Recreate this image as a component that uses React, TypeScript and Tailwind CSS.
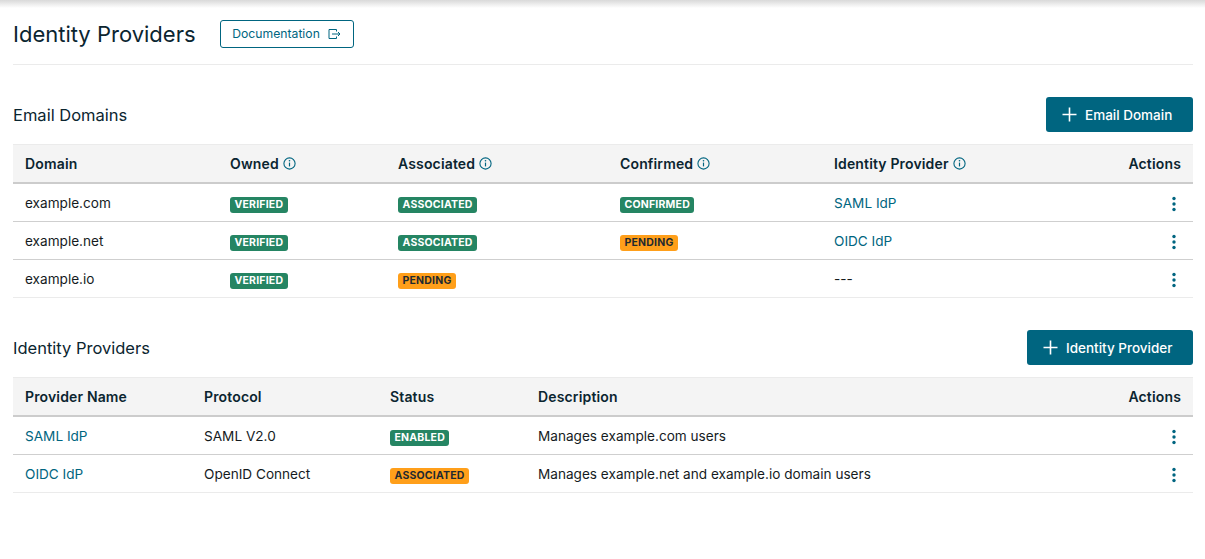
import React from "react";

const InfoIcon = () => (
  <svg width="13" height="13" viewBox="0 0 13 13" fill="none" className="-mt-[2px] text-[#006580]">
    <circle cx="6.5" cy="6.5" r="5.6" stroke="currentColor" strokeWidth="1.1" />
    <path d="M6.5 5.6v3.8" stroke="currentColor" strokeWidth="1.2" />
    <circle cx="6.5" cy="3.8" r="0.8" fill="currentColor" />
  </svg>
);

const KebabIcon = () => (
  <svg width="4" height="16" viewBox="0 0 4 16" className="text-[#006580]">
    <circle cx="2" cy="2.5" r="1.7" fill="currentColor" />
    <circle cx="2" cy="8" r="1.7" fill="currentColor" />
    <circle cx="2" cy="13.5" r="1.7" fill="currentColor" />
  </svg>
);

const ExitIcon = () => (
  <svg width="13" height="10" viewBox="0 0 13 10" fill="none" className="text-[#006580]">
    <path d="M8.5 2.5V0.5H1v9h7.5v-2" stroke="currentColor" strokeWidth="1" />
    <path d="M4 5h8M10 3l2 2-2 2" stroke="currentColor" strokeWidth="1" />
  </svg>
);

const PlusIcon = () => (
  <svg width="15" height="15" viewBox="0 0 15 15" fill="none" className="text-white">
    <path d="M7.5 0.5v14M0.5 7.5h14" stroke="currentColor" strokeWidth="1.6" />
  </svg>
);

// badge cells sit 1px lower than the text cells
const Badge = ({ label, kind }: { label: string; kind: "green" | "orange" }) => (
  <td className="px-3 pt-[2px]">
    <span
      className={
        kind === "green"
          ? "inline-flex h-4 items-center rounded-[3px] bg-[#258563] px-[4.5px] align-middle text-[10.5px] font-bold tracking-[0.2px] text-white"
          : "inline-flex h-4 items-center rounded-[3px] bg-[#ff9f1a] px-[4.5px] align-middle text-[10.5px] font-bold tracking-[0.2px] text-[#1f2a30]"
      }
    >
      {label}
    </span>
  </td>
);

const HeadCell = ({ label, info, width }: { label: string; info?: boolean; width: string }) => (
  <th className={`${width} px-3 pt-[2px] text-left text-sm leading-5 font-semibold tracking-[0.15px] text-[#0b2530]`}>
    <span className="inline-flex items-center gap-1">
      {label}
      {info && <InfoIcon />}
    </span>
  </th>
);

const ActionsHead = () => (
  <th className="px-3 pt-[2px] text-right text-sm leading-5 font-semibold tracking-[0.15px] text-[#0b2530]">Actions</th>
);

const ActionsCell = () => (
  <td className="px-3 text-right">
    <span className="inline-flex pr-[5px] align-middle">
      <KebabIcon />
    </span>
  </td>
);

const Link = ({ children }: { children: React.ReactNode }) => (
  <span className="text-[#006580]">{children}</span>
);

const firstRow = "h-[39px] border-b border-[#cfcfcf] text-[13.6px] leading-5 text-[#151b1e]";
const rowLine = "h-[38px] border-b border-[#cfcfcf] text-[13.6px] leading-5 text-[#151b1e]";
const lastRow = "h-[38px] border-b border-[#ebebeb] text-[13.6px] leading-5 text-[#151b1e]";
const headRow = "h-[38px] border-t border-[#ebebeb] border-b-2 border-b-[#cccccc] bg-[#f4f4f4]";

const SectionHead = ({ title, action, width }: { title: string; action: string; width: string }) => (
  <div className="flex h-[35px] items-center justify-between">
    <h2 className="pt-[1px] text-[16.5px] leading-6 font-normal text-[#0b2530]">{title}</h2>
    <button className={`${width} flex h-[35px] items-center justify-start gap-2 rounded-[3px] bg-[#006580] pl-4 text-[13.5px] leading-5 font-medium text-white`}>
      <PlusIcon />
      {action}
    </button>
  </div>
);

export default function App() {
  return (
    <div className="relative h-[559px] bg-white px-[13px] pr-3 font-['Inter',sans-serif]">
      <div className="absolute inset-x-0 top-0 h-2 bg-gradient-to-b from-[#d9d9d9] to-white" />

      <div className="flex h-[65px] items-center gap-6 border-b border-[#ebebeb] pt-[4px]">
        <h1 className="text-[22px] font-normal text-[#0b2530]">Identity Providers</h1>
        <button className="flex h-[28px] w-[134px] items-center justify-center gap-2 rounded-[3px] border border-[#006580] text-[12.2px] font-normal text-[#006580]">
          Documentation
          <ExitIcon />
        </button>
      </div>

      <div className="mt-8">
        <SectionHead title="Email Domains" action="Email Domain" width="w-[147px]" />
        <table className="mt-3 w-full table-fixed border-collapse">
          <thead>
            <tr className={headRow}>
              <HeadCell label="Domain" width="w-[205px]" />
              <HeadCell label="Owned" info width="w-[168px]" />
              <HeadCell label="Associated" info width="w-[222px]" />
              <HeadCell label="Confirmed" info width="w-[214px]" />
              <HeadCell label="Identity Provider" info width="w-[200px]" />
              <ActionsHead />
            </tr>
          </thead>
          <tbody>
            <tr className={firstRow}>
              <td className="px-3 pt-[2px]">example.com</td>
              <Badge label="VERIFIED" kind="green" />
              <Badge label="ASSOCIATED" kind="green" />
              <Badge label="CONFIRMED" kind="green" />
              <td className="px-3 pt-[2px]"><Link>SAML IdP</Link></td>
              <ActionsCell />
            </tr>
            <tr className={rowLine}>
              <td className="px-3">example.net</td>
              <Badge label="VERIFIED" kind="green" />
              <Badge label="ASSOCIATED" kind="green" />
              <Badge label="PENDING" kind="orange" />
              <td className="px-3"><Link>OIDC IdP</Link></td>
              <ActionsCell />
            </tr>
            <tr className={lastRow}>
              <td className="px-3">example.io</td>
              <Badge label="VERIFIED" kind="green" />
              <Badge label="PENDING" kind="orange" />
              <td className="px-3"></td>
              <td className="px-3">---</td>
              <ActionsCell />
            </tr>
          </tbody>
        </table>
      </div>

      <div className="mt-8">
        <SectionHead title="Identity Providers" action="Identity Provider" width="w-[166px]" />
        <table className="mt-3 w-full table-fixed border-collapse">
          <thead>
            <tr className={headRow}>
              <HeadCell label="Provider Name" width="w-[179px]" />
              <HeadCell label="Protocol" width="w-[186px]" />
              <HeadCell label="Status" width="w-[148px]" />
              <HeadCell label="Description" width="w-[500px]" />
              <ActionsHead />
            </tr>
          </thead>
          <tbody>
            <tr className={firstRow}>
              <td className="px-3 pt-[2px]"><Link>SAML IdP</Link></td>
              <td className="px-3 pt-[2px]">SAML V2.0</td>
              <Badge label="ENABLED" kind="green" />
              <td className="px-3 pt-[2px]">Manages example.com users</td>
              <ActionsCell />
            </tr>
            <tr className={lastRow}>
              <td className="px-3"><Link>OIDC IdP</Link></td>
              <td className="px-3">OpenID Connect</td>
              <Badge label="ASSOCIATED" kind="orange" />
              <td className="px-3">Manages example.net and example.io domain users</td>
              <ActionsCell />
            </tr>
          </tbody>
        </table>
      </div>
    </div>
  );
}
